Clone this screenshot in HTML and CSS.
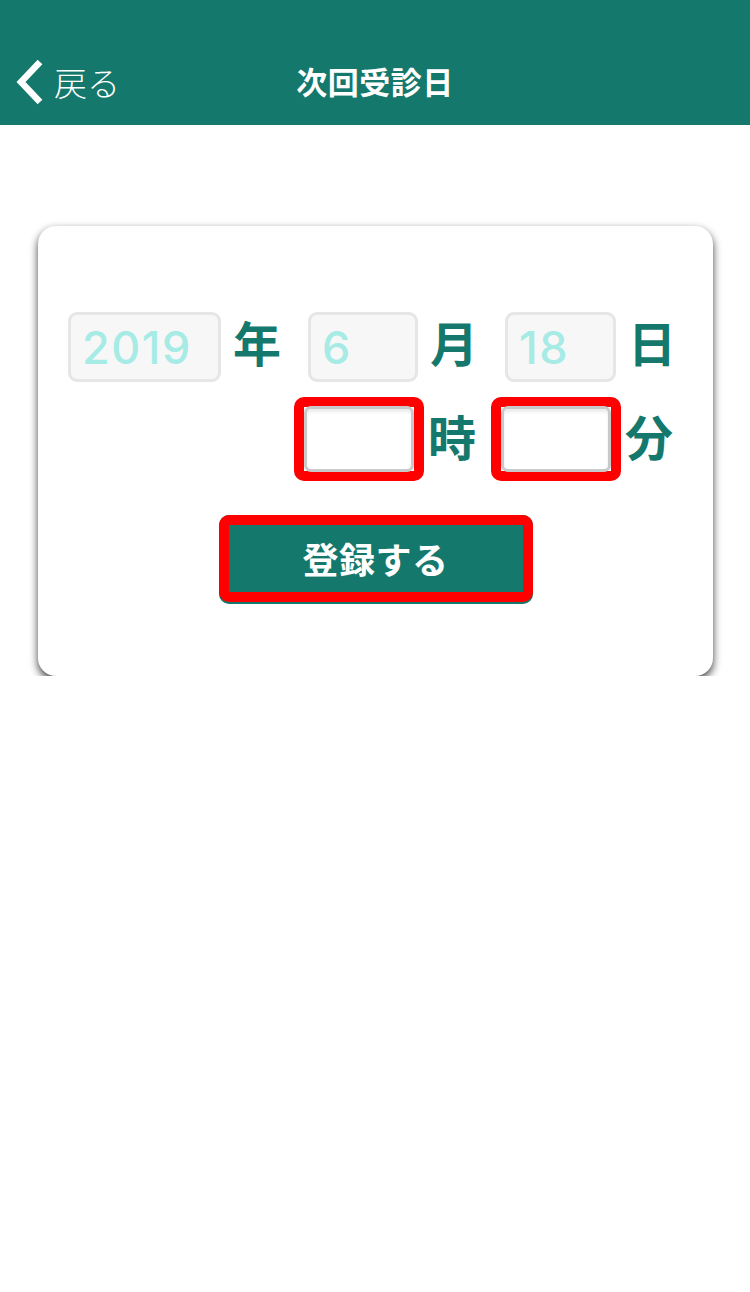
FILE: index.html
```html
<!DOCTYPE html>
<html lang="ja">
<head>
<meta charset="utf-8">
<title>次回受診日</title>
<link rel="stylesheet" href="styles.css">
</head>
<body>
<header class="appbar">
  <nav class="nav">
    <a class="back" href="#">
      <svg class="chev" width="30" height="46" viewBox="0 0 30 46" aria-hidden="true">
        <path d="M25 3 L6 23 L25 43" fill="none" stroke="#fff" stroke-width="6.5" stroke-linejoin="miter"/>
      </svg>
      <span class="back-label">戻る</span>
    </a>
    <h1 class="title">次回受診日</h1>
    <span class="spacer"></span>
  </nav>
</header>
<main class="main">
  <section class="card">
    <div class="row row-date">
      <input class="field field-ro field-year" type="text" value="2019" readonly>
      <span class="unit">年</span>
      <input class="field field-ro field-md" type="text" value="6" readonly>
      <span class="unit">月</span>
      <input class="field field-ro field-day" type="text" value="18" readonly>
      <span class="unit">日</span>
    </div>
    <div class="row row-time">
      <span class="mark"><input class="field field-time" type="text" value=""></span>
      <span class="unit unit-time">時</span>
      <span class="mark mark-min"><input class="field field-time" type="text" value=""></span>
      <span class="unit unit-time">分</span>
    </div>
    <div class="actions">
      <button class="submit" type="button">登録する</button>
    </div>
  </section>
</main>
</body>
</html>
```

FILE: styles.css
```css
* { box-sizing: border-box; }

html, body {
  margin: 0;
  padding: 0;
  background: #ffffff;
  font-family: "Noto Sans CJK JP", "Noto Sans", sans-serif;
}

.appbar {
  background: #14786c;
  height: 125px;
  padding-top: 40px;
}

.nav {
  height: 84px;
  display: grid;
  grid-template-columns: 1fr auto 1fr;
  align-items: center;
}

.back {
  display: flex;
  align-items: center;
  padding-left: 15px;
  color: #ffffff;
  text-decoration: none;
}

.chev { display: block; }

.back-label {
  margin-left: 9px;
  font-size: 33px;
  font-weight: 300;
  line-height: 1;
}

.title {
  margin: 0 0 4px;
  color: #ffffff;
  font-size: 31px;
  font-weight: 700;
  line-height: 1;
  letter-spacing: 0.5px;
}

.main {
  padding: 101px 37px 0 38px;
}

.card {
  background: #ffffff;
  border-radius: 18px;
  box-shadow: 0 4px 8px rgba(0, 0, 0, 0.75);
  height: 450px;
  padding: 86px 0 0 30px;
}

.row {
  display: flex;
  align-items: center;
}

.field {
  display: block;
  margin: 0;
  font-family: "Inter", "Roboto", sans-serif;
  font-size: 45px;
  font-weight: 500;
  letter-spacing: 1.5px;
  outline: none;
}

.field-ro {
  height: 70px;
  background: #f7f7f7;
  border: 3px solid #e6e6e6;
  border-radius: 9px;
  color: #a6ebe5;
  padding: 0 0 0 11px;
}

.field-year { width: 153px; }
.field-md { width: 110px; }
.field-day { width: 111px; }

.unit {
  width: 48px;
  margin-left: 12px;
  margin-right: 27px;
  color: #14786c;
  font-size: 48px;
  font-weight: 700;
  line-height: 1;
}

.row-date .unit {
  position: relative;
  top: -6px;
}

.row-date .unit:last-child { margin-right: 0; }

.row-time {
  margin-top: 15px;
  padding-left: 226px;
}

.mark {
  display: block;
  border: 10px solid #ff0000;
  border-radius: 10px;
  padding: 0;
}

.unit-time {
  position: relative;
  top: -4px;
  margin-left: 4px;
  margin-right: 15px;
}

.row-time .unit:last-child { margin-right: 0; }

.field-time {
  width: 110px;
  height: 66px;
  background: #ffffff;
  border: 3px solid #c9c9c9;
  border-radius: 7px;
  box-shadow: inset 0 3px 3px rgba(0, 0, 0, 0.08);
  padding: 0 10px;
  margin: -1px 0;
}

.actions {
  display: flex;
  justify-content: center;
  margin-top: 34px;
  padding-right: 30px;
}

.submit {
  position: relative;
  width: 314px;
  height: 89px;
  padding: 0 0 4px;
  border: none;
  border-radius: 10px;
  background: #14786c;
  color: #ffffff;
  font-family: "Noto Sans CJK JP", sans-serif;
  font-size: 36px;
  font-weight: 700;
  letter-spacing: 0.5px;
}

.submit::after {
  content: "";
  position: absolute;
  left: 0;
  top: 0;
  right: 0;
  bottom: 2px;
  border: 10px solid #ff0000;
  border-radius: 10px;
}
```
